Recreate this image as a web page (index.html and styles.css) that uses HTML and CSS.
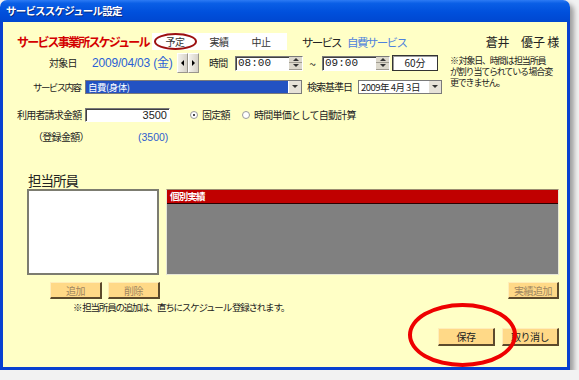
FILE: index.html
```html
<!DOCTYPE html>
<html lang="ja">
<head>
    <meta charset="UTF-8">
    <meta name="viewport" content="width=device-width, initial-scale=1.0">
    <title>サービススケジュール設定</title>
    <link rel="stylesheet" href="styles.css">
</head>
<body>
    <div class="window">
        <div class="titlebar">サービススケジュール設定</div>
        <div class="client">
            <div class="row head">
                <div class="page-title">サービス事業所スケジュール</div>
                <div class="status-box">
                    <span class="status st-plan">予定</span>
                    <span class="status">実績</span>
                    <span class="status">中止</span>
                    <span class="mark-small"></span>
                </div>
                <span class="svc-label">サービス</span>
                <span class="svc-name">自費サービス</span>
                <span class="client-name">蒼井　優子 様</span>
            </div>

            <div class="top-form">
                <div class="fields">
                    <div class="row r-date">
                        <span class="lbl lbl-date">対象日</span>
                        <span class="date-text">2009/04/03 (金)</span>
                        <div class="spin-pair">
                            <span class="spin-btn"><i class="tri-left"></i></span>
                            <span class="spin-btn"><i class="tri-right"></i></span>
                        </div>
                        <span class="lbl lbl-time">時間</span>
                        <div class="field time-field">
                            <span class="time-val">08:00</span>
                            <div class="updown"><span><i class="tri-up"></i></span><span><i class="tri-down"></i></span></div>
                        </div>
                        <span class="tilde">~</span>
                        <div class="field time-field">
                            <span class="time-val">09:00</span>
                            <div class="updown"><span><i class="tri-up"></i></span><span><i class="tri-down"></i></span></div>
                        </div>
                        <div class="dur">60分</div>
                    </div>
                    <div class="row r-svc">
                        <span class="lbl lbl-svc">サービス内容</span>
                        <div class="select sel-svc">
                            <span class="sel-val">自費(身体)</span>
                            <span class="drop"><i class="tri-down"></i></span>
                        </div>
                        <span class="lbl lbl-base">検索基準日</span>
                        <div class="select sel-date">
                            <span class="sel-val">2009年 4月 3日</span>
                            <span class="drop"><i class="tri-down"></i></span>
                        </div>
                    </div>
                </div>
                <div class="note">
                    <div>※ 対象日、時間は 担当所員</div>
                    <div>が割り当てられている 場合変</div>
                    <div>更できません。</div>
                </div>
            </div>

            <div class="row r-amount">
                <span class="lbl lbl-amount">利用者請求金額</span>
                <div class="field amount-field">3500</div>
                <span class="radio checked"></span>
                <span class="lbl">固定額</span>
                <span class="radio radio-2"></span>
                <span class="lbl">時間単価として自動計算</span>
            </div>

            <div class="row r-reg">
                <span class="lbl lbl-reg">（登録金額）</span>
                <span class="reg-val">(3500)</span>
            </div>

            <div class="staff-heading">担当所員</div>

            <div class="panels">
                <div class="staff-list"></div>
                <div class="records">
                    <div class="records-head">個別実績</div>
                </div>
            </div>

            <div class="row btn-row">
                <button class="btn btn-dim">追加</button>
                <button class="btn btn-dim">削除</button>
                <button class="btn btn-dim btn-right">実績追加</button>
            </div>

            <div class="member-note">※ 担当所員の追加は、直ちにスケジュール 登録されます。</div>

            <div class="row footer">
                <button class="btn btn-main">保存</button>
                <button class="btn btn-main">取り消し</button>
            </div>
        </div>
        <div class="mark-big"></div>
    </div>
</body>
</html>
```

FILE: styles.css
```css
body {
    margin: 0;
    background: #f2f2f2;
    font-family: "Noto Sans CJK JP", "Liberation Sans", sans-serif;
    font-size: 10px;
    color: #222;
}
.window {
    position: relative;
    width: 570px;
    border-radius: 7px 7px 0 0;
    box-shadow: 4px 4px 5px rgba(0,0,0,0.35);
}
.titlebar {
    height: 22px;
    box-sizing: border-box;
    padding: 3px 0 0 6px;
    border-radius: 7px 7px 0 0;
    background: linear-gradient(#2d7bf4 0%, #0a5fe6 15%, #0050dc 55%, #0047d0 100%);
    color: #fff;
    font-weight: bold;
    font-size: 10.5px;
    line-height: 15px;
    letter-spacing: -0.8px;
    text-shadow: 1px 1px 0 #0a2a80;
}
.client {
    height: 348px;
    box-sizing: border-box;
    border: 3px solid #0840d0;
    border-top: none;
    background: #ffffc6;
    padding: 11px 8px 0 14px;
}
.row {
    display: flex;
    align-items: center;
    white-space: nowrap;
}
.head {
    height: 17px;
}
.page-title {
    width: 135px;
    color: #d40000;
    font-weight: bold;
    font-size: 12px;
    letter-spacing: -1.8px;
    line-height: 17px;
}
.status-box {
    position: relative;
    display: flex;
    width: 135px;
    height: 17px;
    background: #fff;
}
.status {
    width: 42px;
    text-align: center;
    line-height: 17px;
    color: #333;
    letter-spacing: -0.5px;
}
.st-plan {
    width: 46px;
}
.mark-small {
    position: absolute;
    left: 2px;
    top: 0;
    width: 43px;
    height: 17px;
    box-sizing: border-box;
    border: 2px solid #9c1010;
    border-radius: 50%;
}
.svc-label {
    margin-left: 15px;
    font-size: 11.5px;
    letter-spacing: -1.8px;
    width: 45px;
}
.svc-name {
    color: #4f82dc;
    font-size: 11.5px;
    letter-spacing: -1.6px;
}
.client-name {
    margin-left: auto;
    font-size: 12px;
    letter-spacing: -0.2px;
}
.top-form {
    display: flex;
    height: 41px;
    margin-top: 3px;
}
.fields {
    width: 425px;
    flex-shrink: 0;
}
.r-date {
    height: 20px;
}
.lbl {
    letter-spacing: -0.7px;
    line-height: 12px;
    white-space: nowrap;
}
.lbl-date {
    margin-left: 32px;
    width: 43px;
}
.date-text {
    width: 85px;
    flex-shrink: 0;
    color: #2b5fd6;
    font-family: "Liberation Sans", "Noto Sans CJK JP", sans-serif;
    font-size: 12px;
    letter-spacing: -0.2px;
    line-height: 14px;
}
.spin-pair {
    display: flex;
    width: 22px;
    height: 20px;
}
.spin-btn {
    flex: 1;
    display: flex;
    align-items: center;
    justify-content: center;
    background: linear-gradient(90deg, #f4f2ec, #d6d2c8);
    border: 1px solid #fff;
    border-right-color: #9a968c;
    border-bottom-color: #9a968c;
}
.tri-left, .tri-right, .tri-up, .tri-down {
    display: block;
    width: 0;
    height: 0;
}
.tri-left {
    border-top: 3px solid transparent;
    border-bottom: 3px solid transparent;
    border-right: 3px solid #000;
}
.tri-right {
    border-top: 3px solid transparent;
    border-bottom: 3px solid transparent;
    border-left: 3px solid #000;
}
.tri-up {
    border-left: 3px solid transparent;
    border-right: 3px solid transparent;
    border-bottom: 3px solid #333;
}
.tri-down {
    border-left: 3px solid transparent;
    border-right: 3px solid transparent;
    border-top: 3px solid #333;
}
.lbl-time {
    margin-left: 10px;
    width: 26px;
}
.field {
    box-sizing: border-box;
    background: #fff;
    border: 1px solid #fff;
    border-top-color: #7a7a7a;
    border-left-color: #7a7a7a;
    box-shadow: inset 1px 1px 0 #404040;
}
.time-field {
    display: flex;
    width: 68px;
    height: 15px;
}
.time-val {
    flex: 1;
    padding-left: 2px;
    font-family: "Liberation Mono", monospace;
    font-size: 11px;
    line-height: 13px;
}
.updown {
    display: flex;
    flex-direction: column;
    width: 13px;
}
.updown span {
    flex: 1;
    display: flex;
    align-items: center;
    justify-content: center;
    background: #dcd8cc;
    border-bottom: 1px solid #a09c92;
}
.tilde {
    width: 19px;
    text-align: center;
    font-size: 12px;
}
.dur {
    margin-left: 2px;
    width: 46px;
    height: 16px;
    box-sizing: border-box;
    background: #fff;
    border: 1px solid #333;
    box-shadow: inset 1px 1px 0 #999;
    text-align: center;
    line-height: 14px;
}
.r-svc {
    margin-top: 6px;
    height: 15px;
}
.lbl-svc {
    margin-left: 16px;
    width: 52px;
    font-size: 9.5px;
    letter-spacing: -1.6px;
}
.select {
    display: flex;
    height: 14px;
    box-sizing: border-box;
    border: 1px solid #7a7a7a;
    background: #fff;
}
.sel-svc {
    width: 217px;
    background: #2352c2;
    color: #fff;
}
.sel-date {
    width: 84px;
}
.sel-val {
    flex: 1;
    padding-left: 2px;
    line-height: 12px;
    font-size: 9.5px;
    letter-spacing: -0.5px;
    white-space: nowrap;
    overflow: hidden;
}
.drop {
    width: 12px;
    display: flex;
    align-items: center;
    justify-content: center;
    background: #e6e2d8;
    border-left: 1px solid #fff;
}
.lbl-base {
    margin-left: 5px;
    width: 51px;
    letter-spacing: -1px;
}
.note {
    margin-left: 8px;
    margin-top: 2px;
    font-size: 9px;
    line-height: 11px;
    letter-spacing: -1.2px;
    white-space: nowrap;
}
.note div {
    height: 11px;
}
.r-amount {
    margin-top: 14px;
    height: 14px;
}
.lbl-amount {
    width: 68px;
    letter-spacing: -0.8px;
}
.amount-field {
    width: 85px;
    height: 14px;
    text-align: right;
    padding-right: 2px;
    font-family: "Liberation Sans", sans-serif;
    font-size: 11px;
    line-height: 12px;
}
.radio {
    margin: 0 4px 0 20px;
    width: 8px;
    height: 8px;
    box-sizing: border-box;
    border-radius: 50%;
    background: #fff;
    border: 1px solid #9a9a9a;
    position: relative;
}
.radio.checked::after {
    content: "";
    position: absolute;
    left: 2px;
    top: 2px;
    width: 2px;
    height: 2px;
    border-radius: 50%;
    background: #111;
}
.radio-2 {
    margin-left: 12px;
}
.r-reg {
    margin-top: 8px;
    height: 14px;
}
.lbl-reg {
    margin-left: 16px;
    width: 105px;
}
.reg-val {
    color: #3060d0;
    font-family: "Liberation Sans", sans-serif;
    font-size: 10.5px;
}
.staff-heading {
    margin-top: 28px;
    margin-left: 11px;
    height: 16px;
    font-size: 13.5px;
    line-height: 16px;
    letter-spacing: -1px;
}
.panels {
    display: flex;
    margin-top: 1px;
    margin-left: 10px;
    height: 86px;
    gap: 7px;
}
.staff-list {
    width: 132px;
    box-sizing: border-box;
    background: #fff;
    border: 2px solid #7c7c70;
}
.records {
    flex: 1;
    box-sizing: border-box;
    background: #808080;
    border: 1px solid #e6e6d6;
    border-top-color: #9c8c70;
}
.records-head {
    height: 13px;
    background: #c00000;
    border-bottom: 1px solid #2a0000;
    color: #fff;
    font-weight: bold;
    font-size: 9.5px;
    line-height: 13px;
    padding-left: 3px;
    letter-spacing: -0.8px;
}
.btn-row {
    margin-top: 7px;
    height: 17px;
    padding-left: 33px;
    gap: 6px;
}
.btn {
    box-sizing: border-box;
    font-family: inherit;
    font-size: 10px;
    letter-spacing: -0.5px;
    padding: 0;
    background: #ffd987;
    border: 1px solid #ffedb8;
    border-right: 2px solid #5c4a2c;
    border-bottom: 2px solid #5c4a2c;
    line-height: 13px;
}
.btn-dim {
    width: 52px;
    height: 17px;
    color: #a08660;
}
.btn-right {
    margin-left: auto;
    width: 51px;
}
.member-note {
    margin-top: 2px;
    margin-left: 56px;
    height: 12px;
    line-height: 12px;
    font-size: 9.5px;
    letter-spacing: -1.2px;
}
.footer {
    margin-top: 15px;
    justify-content: flex-end;
    gap: 7px;
}
.btn-main {
    width: 57px;
    height: 18px;
    color: #222;
}
.mark-big {
    position: absolute;
    left: 408px;
    top: 303px;
    width: 109px;
    height: 64px;
    box-sizing: border-box;
    border: 4px solid #ee0000;
    border-radius: 50%;
}
```
